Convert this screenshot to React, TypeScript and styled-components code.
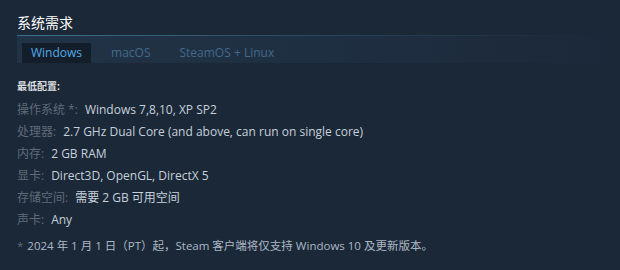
import React from "react";
import styled, { createGlobalStyle } from "styled-components";

const FONT = `"Open Sans", "Noto Sans CJK SC", sans-serif`;

const Global = createGlobalStyle`
  html, body { margin: 0; padding: 0; background: #1b2838; }
  body { font-family: ${FONT}; }
`;

const Page = styled.div`
  width: 620px;
  height: 270px;
  box-sizing: border-box;
  padding: 13px 0 0 17px;
  background: #1b2838;
  font-family: ${FONT};
`;

const Heading = styled.h2`
  margin: 0;
  font-size: 14px;
  font-weight: normal;
  line-height: 20px;
  color: #ffffff;
  padding-bottom: 2px;
  border-bottom: 1px solid transparent;
  border-image: linear-gradient(to right, #3b6e8c 5%, rgba(59, 110, 140, 0.5) 45%, rgba(27, 40, 56, 0) 95%) 1;
`;

const TabBar = styled.div`
  display: flex;
  align-items: flex-end;
  height: 27px;
  padding-left: 5px;
  background: linear-gradient(to right, #213346 0%, #1f2f42 50%, #1b2838 100%);
`;

const Tab = styled.div<{ $active?: boolean }>`
  height: 20px;
  line-height: 19px;
  padding: 0 9px;
  margin-right: 11px;
  font-size: 12px;
  color: ${(p) => (p.$active ? "#52aae6" : "#426a8c")};
  background: ${(p) => (p.$active ? "#141e2a" : "transparent")};
`;

const Body = styled.div`
  padding-top: 16px;
`;

const Title = styled.div`
  font-size: 10px;
  font-weight: bold;
  color: #dcdedf;
  line-height: 14px;
  margin-bottom: 6px;
`;

const List = styled.ul`
  list-style: none;
  margin: 0;
  padding: 0;
`;

const Row = styled.li`
  font-size: 12px;
  line-height: 22px;
  color: #c6d0da;
`;

const Label = styled.span`
  color: #5f6b78;
  margin-right: 7px;
`;

const Note = styled.div`
  margin-top: 4px;
  font-size: 11.5px;
  line-height: 22px;
  color: #acb8c4;
`;

const Star = styled.span`
  color: #5f6b78;
  margin-right: 4px;
`;

const rows: [string, string][] = [
  ["操作系统 *:", "Windows 7,8,10, XP SP2"],
  ["处理器:", "2.7 GHz Dual Core (and above, can run on single core)"],
  ["内存:", "2 GB RAM"],
  ["显卡:", "Direct3D, OpenGL, DirectX 5"],
  ["存储空间:", "需要 2 GB 可用空间"],
  ["声卡:", "Any"],
];

export default function App() {
  return (
    <Page>
      <Global />
      <Heading>系统需求</Heading>
      <TabBar>
        <Tab $active>Windows</Tab>
        <Tab>macOS</Tab>
        <Tab>SteamOS + Linux</Tab>
      </TabBar>
      <Body>
        <Title>最低配置:</Title>
        <List>
          {rows.map(([l, v]) => (
            <Row key={l}>
              <Label>{l}</Label>
              {v}
            </Row>
          ))}
        </List>
        <Note>
          <Star>*</Star>2024 年 1 月 1 日（PT）起，Steam 客户端将仅支持 Windows 10 及更新版本。
        </Note>
      </Body>
    </Page>
  );
}
